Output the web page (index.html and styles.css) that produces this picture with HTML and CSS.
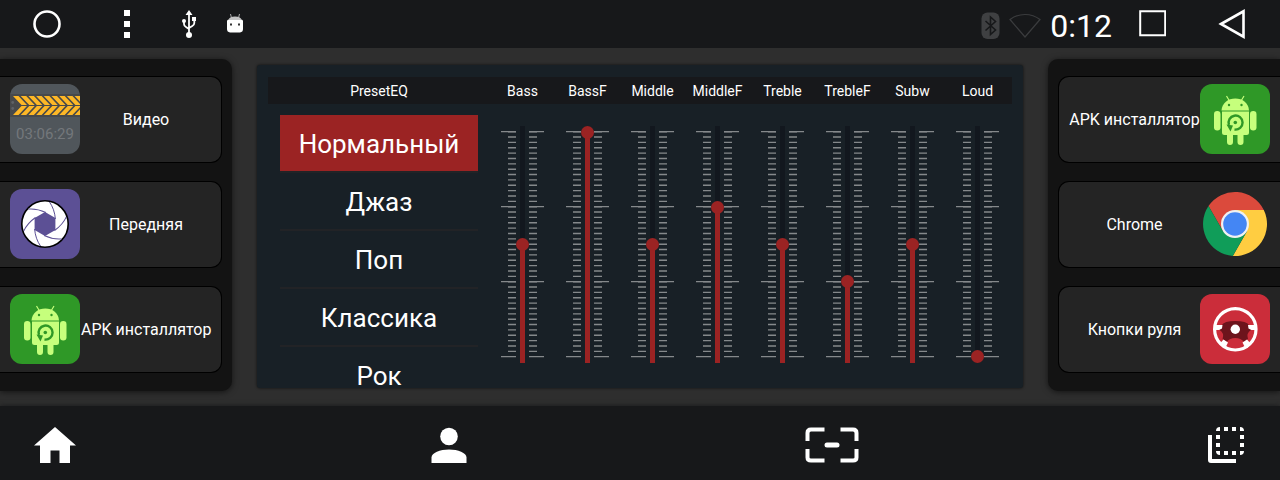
FILE: index.html
```html
<!DOCTYPE html>
<html lang="ru">

<head>
    <meta charset="UTF-8">
    <meta name="viewport" content="width=device-width, initial-scale=1.0">
    <title>Эквалайзер</title>

    <link rel="stylesheet" href="styles.css">
</head>

<body>
    <!-- Shared drawings -->
    <svg class="sprites" aria-hidden="true">
        <symbol id="apk" viewBox="0 0 70 70">
            <rect width="70" height="70" rx="12" fill="#2f9827" />
            <g fill="#c6ff7c">
                <path d="M21.500 26.500C22 19 28 14.500 35.300 14.500S48.600 19 49 26.500z" />
                <path d="M22 27.500h27v21a2.500 2.500 0 0 1-2.500 2.500H43.500v7a3 3 0 0 1-6 0v-7h-4.500v7a3 3 0 0 1-6 0v-7h-2.500a2.500 2.500 0 0 1-2.500-2.500z" />
                <rect x="14" y="27" width="6.500" height="19.500" rx="3.200" />
                <rect x="50" y="27" width="6.500" height="19.500" rx="3.200" />
            </g>
            <path d="M26.500 12l3 5M44 12l-3 5" stroke="#c6ff7c" stroke-width="1.200" />
            <g fill="#2f9827">
                <circle cx="29" cy="21" r="1.200" />
                <circle cx="41.500" cy="21" r="1.200" />
                <circle cx="35.300" cy="38.500" r="1.800" />
                <path d="M26.500 40.500l6.500 1-2.500 6z" />
            </g>
            <path d="M29 41a7 7 0 1 1 5.500 4.500" fill="none" stroke="#2f9827" stroke-width="2.400" />
        </symbol>
        <symbol id="scale" viewBox="0 0 44 238">
            <g fill="none" stroke="#85898b">
                <path d="M11 5V231M32 5V231" stroke-width="8" stroke-dasharray="1.400 3.957" />
                <path d="M7.500 5V232M35.500 5V232" stroke-width="15" stroke-dasharray="1.300 73.700" />
            </g>
        </symbol>
    </svg>

    <!-- Status bar -->
    <header class="status-bar">
        <button class="nav-btn" aria-label="Домой">
            <svg width="28" height="28" viewBox="0 0 28 28">
                <circle cx="14" cy="14" r="12.500" fill="none" stroke="#fff" stroke-width="2.600" />
            </svg>
        </button>
        <button class="nav-btn" aria-label="Меню">
            <svg width="6" height="28" viewBox="0 0 6 28" fill="#fff">
                <path d="M0 0h6v6H0zM0 11h6v6H0zM0 22h6v6H0z" />
            </svg>
        </button>
        <div class="notifications">
            <svg width="14" height="28" viewBox="0 0 14 28" fill="none" stroke="#fff" stroke-width="1.800">
                <path d="M7 3v22M2 11v3q0 2 2 3l3 2M12.300 9v4q0 2-2 3L7 18" />
                <g fill="#fff" stroke="none">
                    <path d="M7 0l3.500 5h-7zM10 7h4v4h-4z" />
                    <circle cx="2" cy="11" r="2" />
                    <circle cx="7" cy="25" r="3" />
                </g>
            </svg>
            <svg width="16" height="22" viewBox="0 0 16 22">
                <path d="M3.500 1l1 4M12.500 1l-1 4" stroke="#aaa" />
                <path d="M0 8q0-1.500 2-1.500h12q2 0 2 1.500v8q0 3-3 3.500H3Q0 19 0 16z" fill="#fff" />
                <path d="M1.500 7Q2 3.500 8 3.500T14.500 7z" fill="#c4c4c4" />
                <path d="M3 10.500h2v2H3zM11 10.500h2v2h-2z" fill="#333" />
            </svg>
        </div>
        <div class="system">
            <svg width="19" height="28" viewBox="0 0 19 28">
                <rect x="0.500" y="0.500" width="18" height="26.500" rx="6" fill="#3f4042" />
                <path d="M4.500 9l10 9-5 4.500V5l5 4.500-10 9" fill="none" stroke="#17181a" stroke-width="1.600" />
            </svg>
            <svg width="32" height="26" viewBox="0 0 32 26">
                <path d="M1 6.500Q7.500 1.500 16 1.500T31 6.500L16 24z" fill="none" stroke="#3b3c3e" stroke-width="1.200" />
            </svg>
            <time class="clock">0:12</time>
        </div>
        <button class="nav-btn" aria-label="Недавние">
            <svg width="28" height="28" viewBox="0 0 28 28">
                <path d="M2.200 1.200h25v24h-25z" fill="none" stroke="#fff" stroke-width="2" />
            </svg>
        </button>
        <button class="nav-btn" aria-label="Назад">
            <svg width="28" height="30" viewBox="0 0 28 30">
                <path d="M3 15L25.500 2.300v25.400z" fill="none" stroke="#fff" stroke-width="2.600" />
            </svg>
        </button>
    </header>

    <main class="desktop">
        <!-- Left apps -->
        <aside class="side side-left">
            <button class="app">
                <svg class="app-icon" viewBox="0 0 70 70">
                    <clipPath id="tile">
                        <rect width="70" height="70" rx="12" />
                    </clipPath>
                    <g clip-path="url(#tile)">
                        <rect width="70" height="70" fill="#50565b" />
                        <rect y="10" width="70" height="23" fill="#47494b" />
                        <g fill="#fdb726">
                            <path id="chevron" d="M3 12h5.500l8.500 9h-5.500zM11.500 22H17l-8.500 9H3z" />
                            <use href="#chevron" x="7.700" />
                            <use href="#chevron" x="15.400" />
                            <use href="#chevron" x="23.100" />
                            <use href="#chevron" x="30.800" />
                            <use href="#chevron" x="38.500" />
                            <use href="#chevron" x="46.200" />
                            <use href="#chevron" x="53.900" />
                            <use href="#chevron" x="61.600" />
                        </g>
                        <circle cx="2.700" cy="18.500" r="1.400" fill="#5f6266" />
                        <circle cx="2.700" cy="24.500" r="1.400" fill="#5f6266" />
                    </g>
                    <text class="timecode" x="35" y="55">03:06:29</text>
                </svg>
                <span class="app-name">Видео</span>
            </button>
            <button class="app">
                <svg class="app-icon" viewBox="0 0 70 70">
                    <rect width="70" height="70" rx="12" fill="#5c5095" />
                    <circle cx="35" cy="35" r="23.200" fill="#fff" stroke="#000" stroke-width="1.600" />
                    <path d="M35 23l10.400 6v12L35 47l-10.400-6V29z" fill="#5c5095" />
                    <g fill="none" stroke="#5c5095" stroke-width="1">
                        <path id="blade" d="M45.400 30Q44.500 20 39.500 13" />
                        <use href="#blade" transform="rotate(60 35 35)" />
                        <use href="#blade" transform="rotate(120 35 35)" />
                        <use href="#blade" transform="rotate(180 35 35)" />
                        <use href="#blade" transform="rotate(240 35 35)" />
                        <use href="#blade" transform="rotate(300 35 35)" />
                    </g>
                </svg>
                <span class="app-name">Передняя</span>
            </button>
            <button class="app">
                <svg class="app-icon"><use href="#apk" /></svg>
                <span class="app-name">APK инсталлятор</span>
            </button>
        </aside>

        <!-- Equalizer -->
        <section class="equalizer">
            <div class="eq-head eq-grid">
                <span>PresetEQ</span>
                <label for="bass">Bass</label>
                <label for="bassf">BassF</label>
                <label for="middle">Middle</label>
                <label for="middlef">MiddleF</label>
                <label for="treble">Treble</label>
                <label for="treblef">TrebleF</label>
                <label for="subw">Subw</label>
                <label for="loud">Loud</label>
            </div>
            <div class="eq-body eq-grid">
                <ul class="presets">
                    <li><button class="preset active">Нормальный</button></li>
                    <li><button class="preset">Джаз</button></li>
                    <li><button class="preset">Поп</button></li>
                    <li><button class="preset">Классика</button></li>
                    <li><button class="preset">Рок</button></li>
                </ul>
                <div class="band">
                    <svg class="scale"><use href="#scale" /></svg>
                    <input type="range" id="bass" min="0" max="42" value="21" style="--fill: 50%">
                </div>
                <div class="band">
                    <svg class="scale"><use href="#scale" /></svg>
                    <input type="range" id="bassf" min="0" max="42" value="42" style="--fill: 97%">
                </div>
                <div class="band">
                    <svg class="scale"><use href="#scale" /></svg>
                    <input type="range" id="middle" min="0" max="42" value="21" style="--fill: 50%">
                </div>
                <div class="band">
                    <svg class="scale"><use href="#scale" /></svg>
                    <input type="range" id="middlef" min="0" max="42" value="28" style="--fill: 66%">
                </div>
                <div class="band">
                    <svg class="scale"><use href="#scale" /></svg>
                    <input type="range" id="treble" min="0" max="42" value="21" style="--fill: 50%">
                </div>
                <div class="band">
                    <svg class="scale"><use href="#scale" /></svg>
                    <input type="range" id="treblef" min="0" max="42" value="14" style="--fill: 34%">
                </div>
                <div class="band">
                    <svg class="scale"><use href="#scale" /></svg>
                    <input type="range" id="subw" min="0" max="42" value="21" style="--fill: 50%">
                </div>
                <div class="band">
                    <svg class="scale"><use href="#scale" /></svg>
                    <input type="range" id="loud" min="0" max="42" value="0" style="--fill: 0%">
                </div>
            </div>
        </section>

        <!-- Right apps -->
        <aside class="side side-right">
            <button class="app">
                <span class="app-name">APK инсталлятор</span>
                <svg class="app-icon"><use href="#apk" /></svg>
            </button>
            <button class="app">
                <span class="app-name">Chrome</span>
                <svg class="app-icon" viewBox="0 0 70 70">
                    <path d="M8.500 17.100A32 32 0 0 1 63.800 21H35L22.900 42z" fill="#db4a3c" />
                    <path d="M63.800 21A32 32 0 0 1 32.800 66.900L47.100 42 35 21z" fill="#ffcd41" />
                    <path d="M32.800 66.900A32 32 0 0 1 8.500 17.100L22.900 42H47.100z" fill="#109d59" />
                    <circle cx="35" cy="35" r="14" fill="#f1f1f1" />
                    <circle cx="35" cy="35" r="11.800" fill="#4486f4" />
                </svg>
            </button>
            <button class="app">
                <span class="app-name">Кнопки руля</span>
                <svg class="app-icon" viewBox="0 0 70 70">
                    <rect width="70" height="70" rx="12" fill="#cb2d3a" />
                    <path d="M22 31Q24 27 35.300 27T49 31l2 5q-5 3-3 9l-4 3q-3-4-8.700-4t-8.700 4l-4-3q2-6-3-9z" fill="#6d141c" />
                    <circle cx="35.300" cy="35.300" r="4.700" fill="#fff" />
                    <circle cx="35.300" cy="35.300" r="20.700" fill="none" stroke="#fff" stroke-width="3.200" />
                    <path d="M14.500 31h8l-.5 3.500-3 1.500h-4zM56 31h-8l.5 3.500 3 1.500h4zM23.500 45.500l4.500 3-2 4-2.500 1.500-4-4zM47 45.500l-4.500 3 2 4L47 54l4-4z" fill="#fff" />
                </svg>
            </button>
        </aside>
    </main>

    <!-- Bottom bar -->
    <footer class="dock">
        <button class="dock-btn dock-edge" aria-label="Главная">
            <svg width="42" height="36" viewBox="0 0 42 36" fill="#fff">
                <path d="M21 0l21 18.500h-6V36H25.500V23.500h-9V36H6V18.500H0z" />
            </svg>
        </button>
        <button class="dock-btn" aria-label="Профиль">
            <svg width="36" height="36" viewBox="0 0 36 36" fill="#fff">
                <circle cx="18" cy="9.500" r="8.800" />
                <path d="M.5 36v-5.500C.5 26 9 22.500 18 22.500S35.500 26 35.500 30.500V36z" />
            </svg>
        </button>
        <button class="dock-btn" aria-label="Масштаб">
            <svg width="54" height="36" viewBox="0 0 54 36" fill="none" stroke="#fff" stroke-width="4">
                <path d="M2.500 14V6q0-3.500 3.500-3.500h13.500M35.500 2.500H48q3.500 0 3.500 3.500v8M51.500 22v8.500q0 3-3.500 3H35.500M19.500 33.500H6q-3.500 0-3.500-3V22" />
                <path d="M22 18h10" stroke-width="5" stroke-linecap="round" />
            </svg>
        </button>
        <button class="dock-btn dock-edge" aria-label="Окна">
            <svg width="36" height="36" viewBox="0 0 36 36" fill="#fff">
                <path d="M0 8h4v24h24v4H3q-3 0-3-3z" />
                <path d="M8 4q0-4 4-4v4zM16 0h4v4h-4zM24 0h4v4h-4zM32 0q4 0 4 4h-4zM8 8h4v4H8zM8 16h4v4H8zM32 8h4v4h-4zM32 16h4v4h-4zM8 24h4v4q-4 0-4-4zM16 24h4v4h-4zM24 24h4v4h-4zM32 24h4q0 4-4 4z" />
            </svg>
        </button>
    </footer>

    <script>
        // Keep the red part of the track under the thumb
        document.querySelectorAll('.band input').forEach(input => {
            input.addEventListener('input', () => {
                const part = input.value / input.max;
                input.style.setProperty('--fill', (part * 97) + '%');
            });
        });

        // Select a preset
        const presets = document.querySelectorAll('.preset');
        presets.forEach(preset => {
            preset.addEventListener('click', () => {
                presets.forEach(item => item.classList.remove('active'));
                preset.classList.add('active');
            });
        });
    </script>
</body>

</html>
```

FILE: styles.css
```css
* {
    box-sizing: border-box;
}

body {
    display: flex;
    flex-direction: column;
    min-height: 100vh;
    margin: 0;
    background-color: #2e2e2e;
    color: #fff;
    font-family: Roboto, "Noto Sans", sans-serif;
    font-size: 16px;
}

button {
    padding: 0;
    border: 0;
    background: none;
    color: inherit;
    font: inherit;
    cursor: pointer;
}

svg {
    display: block;
}

.sprites {
    position: absolute;
    width: 0;
    height: 0;
}

/* Status bar */
.status-bar {
    display: flex;
    align-items: center;
    height: 48px;
    padding: 0 8px 0 7px;
    background-color: #17181a;
}

.nav-btn {
    display: flex;
    justify-content: center;
    align-items: center;
    width: 80px;
    height: 48px;
}

.notifications {
    display: flex;
    align-items: center;
    gap: 31px;
    padding-left: 15px;
}

.system {
    display: flex;
    align-items: center;
    gap: 9px;
    margin-left: auto;
    padding-top: 4px;
}

.clock {
    font-size: 32px;
    line-height: 40px;
}

/* Desktop */
.desktop {
    display: flex;
    flex: 1;
    align-items: flex-start;
    padding: 11px 0 15px;
}

/* Side panels */
.side {
    display: flex;
    flex: none;
    flex-direction: column;
    gap: 18px;
    width: 232px;
    padding: 17px 0 18px;
    background-color: #131313;
    box-shadow: 0 1px 6px rgba(0, 0, 0, 0.6);
}

.side-left {
    padding-right: 10px;
    border-radius: 0 10px 10px 0;
}

.side-right {
    padding-left: 10px;
    border-radius: 10px 0 0 10px;
}

.app {
    display: flex;
    align-items: center;
    height: 87px;
    padding: 0 10px;
    border: 1px solid #000;
    background-color: #242424;
}

.side-left .app {
    gap: 1px;
    border-left: 0;
    border-radius: 0 11px 11px 0;
}

.side-right .app {
    border-right: 0;
    border-radius: 11px 0 0 11px;
}

.app-icon {
    flex: none;
    width: 70px;
    height: 70px;
    margin-bottom: 1px;
}

.app-name {
    flex: 1;
    line-height: 20px;
    text-align: center;
    white-space: nowrap;
}

.timecode {
    fill: #74787b;
    font-size: 15px;
    text-anchor: middle;
}

/* Equalizer */
.equalizer {
    flex: 1;
    margin: 6px 25px 0;
    padding: 12px 11px 0;
    border-radius: 3px;
    background-color: #182026;
    box-shadow: 0 0 3px rgba(0, 0, 0, 0.7);
}

.eq-grid {
    display: grid;
    grid-template-columns: 222px repeat(8, 1fr);
    padding-right: 2px;
}

.eq-head {
    padding-top: 2px;
    background-color: #17181b;
    font-size: 14px;
    line-height: 25px;
    text-align: center;
}

.eq-body {
    padding-top: 11px;
}

.presets {
    max-height: 273px;
    margin: 0 12px;
    padding: 0;
    overflow-y: auto;
    list-style: none;
    scrollbar-width: none;
}

.presets li {
    border-bottom: 2px solid #222326;
}

.preset {
    display: block;
    width: 100%;
    height: 56px;
    padding-top: 2px;
    font-size: 26px;
}

.preset.active {
    background-color: #9b2323;
}

/* Sliders */
.band {
    display: grid;
    justify-content: center;
    align-content: start;
    justify-items: center;
    padding-top: 11px;
}

.scale,
.band input {
    grid-area: 1 / 1;
}

.scale {
    width: 44px;
    height: 238px;
}

.band input {
    width: 13px;
    height: 237px;
    margin: 0;
    background: none;
    appearance: none;
    writing-mode: vertical-lr;
    direction: rtl;
}

.band input::-webkit-slider-runnable-track {
    width: 5px;
    height: 237px;
    background: linear-gradient(to top, #9b2323 var(--fill), #12171e 0);
}

.band input::-webkit-slider-thumb {
    width: 13px;
    height: 13px;
    margin-left: -4px;
    border-radius: 50%;
    background-color: #9b2323;
    appearance: none;
}

/* Bottom bar */
.dock {
    display: flex;
    justify-content: space-between;
    height: 74px;
    padding: 4px 11px 0 12px;
    background-color: #17181a;
    box-shadow: 0 0 5px #17181a;
}

.dock-btn {
    display: flex;
    justify-content: center;
    align-items: center;
    width: 64px;
}

.dock-edge {
    width: 86px;
}
```
